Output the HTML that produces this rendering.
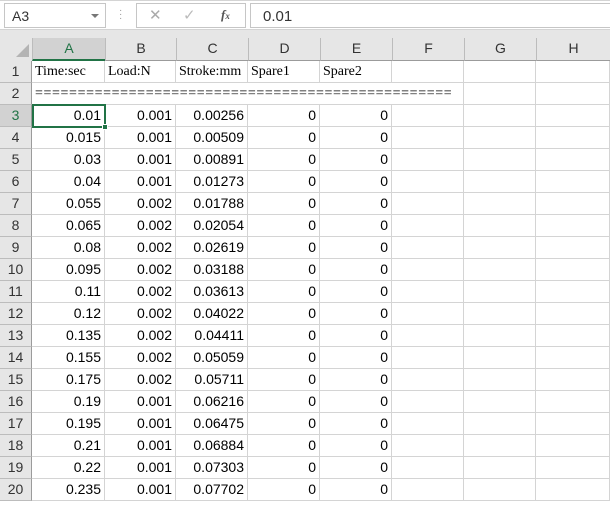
<!DOCTYPE html>
<html><head><meta charset="utf-8"><style>
*{margin:0;padding:0;box-sizing:border-box}
body{width:610px;height:507px;overflow:hidden;background:#fff;font-family:"Liberation Sans",sans-serif;position:relative}
.top{position:absolute;left:0;top:0;width:610px;height:29px;background:#fff;border-top:1px solid #d4d4d4}
.nb{position:absolute;left:4px;top:2px;width:102px;height:25px;border:1px solid #c6c6c6;font-size:14px;color:#333;padding:4px 0 0 7px}
.nb .ar{position:absolute;right:6px;top:10px;border-left:4px solid transparent;border-right:4px solid transparent;border-top:4px solid #777}
.dots{position:absolute;left:119px;top:8px;color:#999;font-size:10px;line-height:4px}
.fb{position:absolute;left:136px;top:2px;width:110px;height:25px;border:1px solid #c6c6c6}
.fv{position:absolute;left:250px;top:2px;width:362px;height:25px;border:1px solid #c6c6c6;font-size:15px;color:#333;padding:4px 0 0 12px}
.gray{position:absolute;left:0;top:29px;width:610px;height:32px;background:#e6e6e6;border-top:1px solid #d4d4d4}
.ch{position:absolute;top:38px;height:23px;font-size:14px;color:#333;text-align:center;line-height:21px;border-left:1px solid #bcbcbc;border-bottom:1px solid #9b9b9b}
.rh{position:absolute;left:0;width:32px;height:22px;background:#e6e6e6;font-size:14px;color:#333;text-align:center;line-height:21px;border-bottom:1px solid #bcbcbc;border-right:1px solid #9b9b9b}
.c{position:absolute;height:22px;border-right:1px solid #d4d4d4;border-bottom:1px solid #d4d4d4;font-size:14px;line-height:21px;color:#000;padding:0 3px;white-space:nowrap}
.s{font-family:"Liberation Serif",serif;font-size:14px}
.n{text-align:right}
</style></head><body>
<div class="top">
<div class="nb">A3<span class="ar"></span></div>
<div class="dots">·<br>·<br>·</div>
<div class="fb"><span style="position:absolute;left:12px;top:2px;color:#aaa;font-size:15px">✕</span><span style="position:absolute;left:46px;top:2px;color:#bbb;font-size:15px">✓</span><span style="position:absolute;left:84px;top:3px;color:#555;font-size:13px;font-style:italic;font-family:'Liberation Serif',serif;font-weight:bold">f<span style="font-size:9px">x</span></span></div>
<div class="fv">0.01</div>
</div>
<div class="gray"></div>
<div style="position:absolute;left:16px;top:44px;width:0;height:0;border-left:13px solid transparent;border-bottom:13px solid #b4b4b4"></div>
<div id="g"></div>
<script>
var cols=[32,105,176,248,320,392,464,536,610],L="ABCDEFGH",h="";
for(var i=0;i<8;i++){var w=cols[i+1]-cols[i];h+='<div class="ch" style="left:'+cols[i]+'px;width:'+w+'px;'+(i==0?'background:#d2d2d2;color:#217346;border-bottom:2px solid #217346':'')+'">'+L[i]+'</div>';}
var d=[["0.01","0.001","0.00256"],["0.015","0.001","0.00509"],["0.03","0.001","0.00891"],["0.04","0.001","0.01273"],["0.055","0.002","0.01788"],["0.065","0.002","0.02054"],["0.08","0.002","0.02619"],["0.095","0.002","0.03188"],["0.11","0.002","0.03613"],["0.12","0.002","0.04022"],["0.135","0.002","0.04411"],["0.155","0.002","0.05059"],["0.175","0.002","0.05711"],["0.19","0.001","0.06216"],["0.195","0.001","0.06475"],["0.21","0.001","0.06884"],["0.22","0.001","0.07303"],["0.235","0.001","0.07702"]];
for(var r=1;r<=20;r++){var y=61+(r-1)*22;
h+='<div class="rh" style="top:'+y+'px;'+(r==3?'background:#d2d2d2;color:#217346':'')+'">'+r+'</div>';
for(var c=0;c<8;c++){var x=cols[c],w=cols[c+1]-cols[c],t="",cl="c";
if(r==1){t=["Time:sec","Load:N","Stroke:mm","Spare1","Spare2","","",""][c];cl+=" s";}
else if(r==2){if(c==0){t="=================================================";cl+=" s";w=cols[1]-cols[0];}
 else if(c<5){h+='<div class="c" style="left:'+x+'px;top:'+y+'px;width:'+w+'px;border-right:none"></div>';continue;}}
else{var v=d[r-3];t=c<3?v[c]:(c<5?"0":"");cl+=" n";}
var st='left:'+x+'px;top:'+y+'px;width:'+w+'px;';
if(r==2&&c==0)st+='overflow:visible;border-right:none;letter-spacing:0.62px;';
h+='<div class="'+cl+'" style="'+st+'">'+t+'</div>';}}
h+='<div style="position:absolute;left:32px;top:104px;width:74px;height:24px;border:2px solid #217346"></div><div style="position:absolute;left:102px;top:124px;width:6px;height:6px;background:#217346;border:1px solid #fff"></div>';
document.getElementById("g").innerHTML=h;
</script>
</body></html>
